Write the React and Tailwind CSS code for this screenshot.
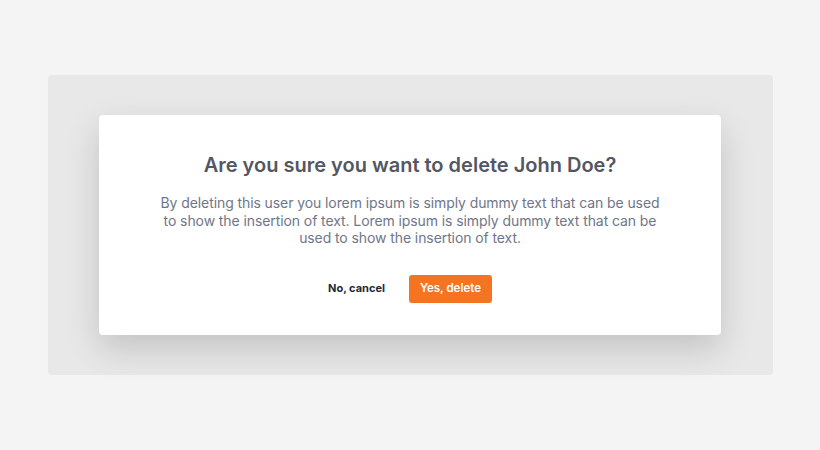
export default function App() {
  return (
    <div
      className="w-[820px] h-[450px] bg-[#f4f4f4] flex items-center justify-center"
      style={{ fontFamily: 'Inter, "Noto Sans", sans-serif' }}
    >
      <div className="w-[725px] h-[300px] bg-[#e8e8e8] rounded-[4px] flex items-center justify-center">
        <div className="w-[622px] h-[220px] bg-white rounded-[4px] shadow-[0_14px_34px_rgba(0,0,0,0.16)] flex flex-col items-center pt-9">
          <h1 className="text-[20px] leading-7 font-semibold text-[#535763]">
            Are you sure you want to delete John Doe?
          </h1>
          <p className="mt-[15px] w-[506px] text-center text-[14px] leading-[17.5px] tracking-[-0.09px] text-[#6f7689]">
            By deleting this user you lorem ipsum is simply dummy text that can be used to show the insertion of text. Lorem ipsum is simply dummy text that can be used to show the insertion of text.
          </p>
          <div className="mt-[28px] flex items-center gap-[24px]">
            <button className="text-[11px] font-bold text-[#1f2937]">No, cancel</button>
            <button className="w-[83px] h-[28px] bg-[#f47421] rounded-[3px] text-[11.5px] font-semibold text-white">
              Yes, delete
            </button>
          </div>
        </div>
      </div>
    </div>
  );
}
